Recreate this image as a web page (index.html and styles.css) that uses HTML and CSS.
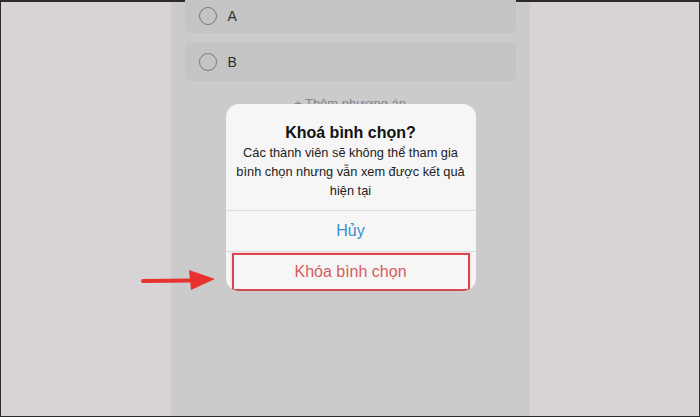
FILE: index.html
```html
<!DOCTYPE html>
<html lang="vi">
<head>
<meta charset="utf-8">
<link rel="stylesheet" href="styles.css">
</head>
<body>
<div class="frame">
  <div class="side"></div>
  <div class="phone">
    <div class="option first"><span class="radio"></span><span class="label">A</span></div>
    <div class="option"><span class="radio"></span><span class="label">B</span></div>
    <div class="add">+ Thêm phương án</div>
    <div class="dialog">
      <div class="body">
        <div class="title">Khoá bình chọn?</div>
        <div class="msg">Các thành viên sẽ không thể tham gia bình chọn nhưng vẫn xem được kết quả hiện tại</div>
      </div>
      <div class="btn cancel">Hủy</div>
      <div class="btn lock"><div class="highlight">Khóa bình chọn</div></div>
    </div>
  </div>
  <div class="side"></div>
  <svg class="arrow" width="80" height="26" viewBox="0 0 80 26">
    <path d="M2 14 L52 13.5" stroke="#e8322f" stroke-width="4" stroke-linecap="round" fill="none"/>
    <path d="M48 3 L74 12 L50 23 Z" fill="#e8322f"/>
  </svg>
</div>
</body>
</html>
```
FILE: styles.css
```css
html, body {
  margin: 0;
  padding: 0;
}
body {
  width: 700px;
  height: 417px;
  overflow: hidden;
  font-family: "Liberation Sans", Arial, sans-serif;
}
.frame {
  position: relative;
  box-sizing: border-box;
  width: 700px;
  height: 417px;
  border: 1px solid #2b2a2c;
  border-top-width: 2px;
  display: flex;
  background: #d8d3d6;
}
.side {
  flex: 1;
  background: #d8d3d6;
}
.phone {
  position: relative;
  width: 359px;
  background: #cbcbcb;
  padding: 0 14px;
  box-sizing: border-box;
  display: flex;
  flex-direction: column;
  gap: 9px;
}
.option {
  height: 39px;
  background: #c3c4c5;
  border-radius: 6px;
  display: flex;
  align-items: center;
  padding-left: 14px;
  gap: 11px;
}
.option.first {
  margin-top: -8px;
  height: 39px;
  padding-top: 4px;
  box-sizing: border-box;
}
.radio {
  width: 16px;
  height: 16px;
  border: 1.5px solid #7b7b7d;
  border-radius: 50%;
}
.label {
  font-size: 14px;
  color: #2e2e30;
}
.add {
  margin-top: 6px;
  text-align: center;
  font-size: 13px;
  color: #858587;
}
.dialog {
  position: absolute;
  left: 55px;
  top: 102px;
  width: 250px;
  height: 187px;
  background: #f6f6f6;
  border-radius: 13px;
  display: flex;
  flex-direction: column;
  overflow: hidden;
}
.body {
  padding: 18px 5px 10px;
  text-align: center;
  border-bottom: 1px solid #dcdcdc;
}
.title {
  font-size: 16px;
  line-height: 21px;
  font-weight: bold;
  color: #111;
}
.msg {
  font-size: 12.8px;
  line-height: 19px;
  color: #222;
}
.btn {
  height: 40px;
  display: flex;
  align-items: center;
  justify-content: center;
  font-size: 16px;
}
.cancel {
  color: #3a8fcf;
  border-bottom: 1px solid #dcdcdc;
}
.lock {
  flex: 1;
  height: auto;
  padding: 1px 6px 0 6px;
  align-items: stretch;
}
.highlight {
  flex: 1;
  border: 2px solid #d8464e;
  box-shadow: 0 0 2px #f3b6b8;
  display: flex;
  align-items: center;
  justify-content: center;
  color: #d55c5e;
  font-size: 16px;
}
.arrow {
  position: absolute;
  left: 140px;
  top: 265px;
}
```
